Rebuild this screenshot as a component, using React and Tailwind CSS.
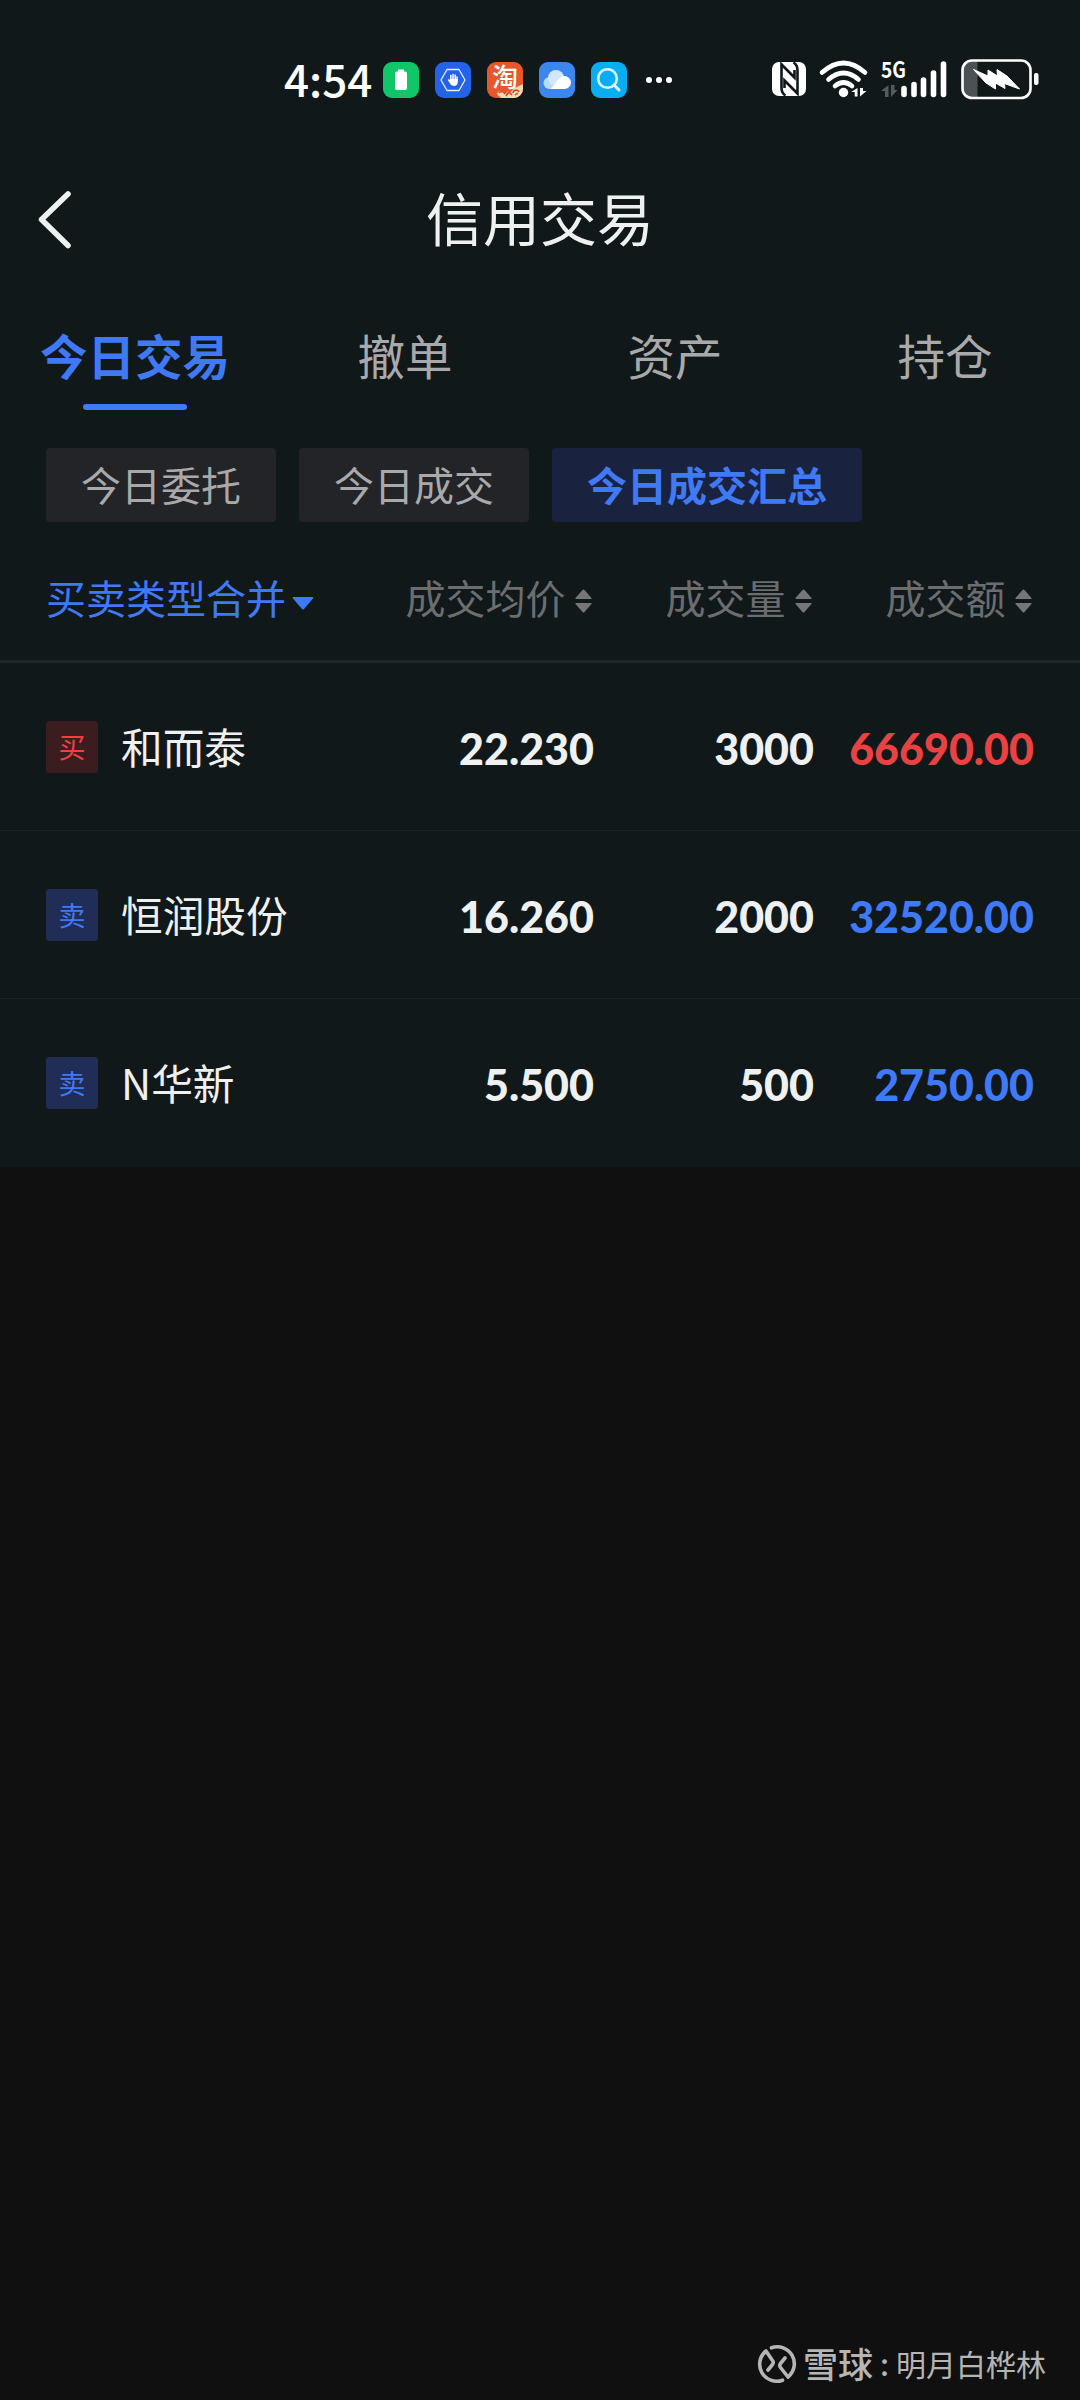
import { useState } from "react";

const TABS = ["今日交易", "撤单", "资产", "持仓"];
const FILTERS = ["今日委托", "今日成交", "今日成交汇总"];

const TRADES = [
  { side: "buy", name: "和而泰", price: "22.230", volume: "3000", amount: "66690.00" },
  { side: "sell", name: "恒润股份", price: "16.260", volume: "2000", amount: "32520.00" },
  { side: "sell", name: "N华新", price: "5.500", volume: "500", amount: "2750.00" },
];

function AppIcons() {
  return (
    <div className="flex gap-4 ml-3">
      <svg width="36" height="36" viewBox="0 0 36 36">
        <rect width="36" height="36" rx="9" fill="#0fc668" />
        <path d="M15 7.500h6v2h1a2 2 0 0 1 2 2V26a2 2 0 0 1-2 2h-8a2 2 0 0 1-2-2V11.500a2 2 0 0 1 2-2h1z" fill="#fff" />
      </svg>
      <svg width="36" height="36" viewBox="0 0 36 36" fill="none">
        <rect width="36" height="36" rx="9" fill="#2462ea" />
        <path d="M12 7.500h12L30 18l-6 10.500H12L6 18z" stroke="#e8f0ff" strokeWidth="1.300" strokeLinejoin="round" />
        <path d="M15.800 18v-4.500M18 17.500v-5M20.200 17.500v-4.500M22 18.500v-3.500M16 20l-2.500-2" stroke="#fff" strokeWidth="1.500" strokeLinecap="round" />
        <path d="M15 17h7.700v3.500c0 2.200-1.500 3.500-3.700 3.500-2 0-3-1-4-2.500l-1.500-2.500z" fill="#fff" />
      </svg>
      <svg className="overflow-visible" width="36" height="36" viewBox="0 0 36 36">
        <rect width="36" height="36" rx="9" fill="#e6582b" />
        <text x="18" y="24.500" textAnchor="middle" fontSize="26" fontWeight="500" fill="#fff" fontFamily="Noto Sans CJK SC">淘</text>
        <path d="M10 32c1-3 5-4 7-2l2 2 2-3 3 1 3-4 5-2 4-2v5a9 9 0 0 1-9 9H14z" fill="#f3d9b4" />
        <path d="M12 31c2-2 4-2 6 1M19 34l3-4 3 3M26 31c0-3 5-4 6-1M28 33l3-2" stroke="#c8472c" strokeWidth="1.500" fill="none" />
      </svg>
      <svg width="36" height="36" viewBox="0 0 36 36">
        <rect width="36" height="36" rx="9" fill="#3b87ee" />
        <circle cx="10.500" cy="21" r="6" fill="#b8dafb" />
        <circle cx="17" cy="16" r="8" fill="#d3e8fd" />
        <circle cx="25.500" cy="20.500" r="6.500" fill="#fff" />
        <path d="M10 27c5 0 7-11 13-11l3 11z" fill="#fff" />
      </svg>
      <svg width="36" height="36" viewBox="0 0 36 36" fill="none">
        <rect width="36" height="36" rx="9" fill="#08adf2" />
        <circle cx="16.500" cy="16.500" r="9.300" stroke="#dff6ff" strokeWidth="2.600" />
        <path d="M23 23l5 5" stroke="#dff6ff" strokeWidth="3" strokeLinecap="round" />
      </svg>
    </div>
  );
}

function StatusBar() {
  return (
    <div className="flex items-center h-40 pl-[284px] text-white">
      <span className="w-[87px] pb-1 text-[44px] font-medium whitespace-nowrap">4:54</span>
      <AppIcons />
      <div className="flex gap-1 ml-[19px]">
        <span className="size-[6px] rounded-full bg-white" />
        <span className="size-[6px] rounded-full bg-white" />
        <span className="size-[6px] rounded-full bg-white" />
      </div>

      {/* nfc, wifi, signal, battery */}
      <svg className="ml-[98px] overflow-visible" width="272" height="48" viewBox="770 56 272 48" fill="none">
        <rect x="772" y="62" width="34" height="34" rx="7" fill="#fff" />
        <path d="M785.500 95.500Q781.500 93 781.500 88V64.500L794.500 77.500V70" stroke="#11181a" strokeWidth="2.600" />
        <path d="M793.500 62.500Q797.500 65 797.500 70V93.500L784.500 80.500V88" stroke="#11181a" strokeWidth="2.600" />

        <path d="M822 72.500Q843.500 53.500 865 72.500M828.500 79.500Q843.500 66.500 858.500 79.500M835 86Q843.500 79 852 86" stroke="#fff" strokeWidth="4.600" strokeLinecap="round" />
        <circle cx="843.500" cy="92.500" r="4.700" fill="#fff" />
        <path d="M857.500 88v8.500h-2.800v-4.500h-3.500zM860 88v8.500l6.500-5.500h-3.500v-3z" fill="#fff" />

        <text x="881" y="77.500" fontSize="22.500" fontWeight="700" fill="#fff" fontFamily="Noto Sans CJK SC" textLength="25" lengthAdjust="spacingAndGlyphs">5G</text>
        <path d="M888.500 85v12h-3.500v-6h-4zM891 85v12l6.500-7h-3V85z" fill="#555b5d" />
        <path d="M904 88.500v6M914 84.500v10M923.500 80v14.500M933.500 73v21.500M943.500 64v30.500" stroke="#fff" strokeWidth="5.600" strokeLinecap="round" />

        <path d="M972 61h5.500v36H972a9 9 0 0 1-9-9V70a9 9 0 0 1 9-9z" fill="#4c5153" />
        <rect x="962.500" y="60.500" width="68" height="37.500" rx="9.500" stroke="#fff" strokeWidth="2.600" />
        <rect x="1034" y="73" width="4.500" height="12" rx="2" fill="#fff" />
        <path d="M973.500 69.500l14.500 6.500 0-6 9.500 6-.5-6.500 10 6.500 12.500 13-15-5.500.5 5-9.500-5.500 0 6-9.500-6z" fill="#fff" stroke="#fff" strokeWidth="1" strokeLinejoin="round" />
      </svg>
    </div>
  );
}

function SortIcon() {
  return (
    <svg className="mt-[9px]" width="17" height="24" viewBox="0 0 17 24" fill="#757678">
      <path d="M7.500 1q1-1 2 0l7 8q.5 1-.5 1H1q-1 0-.5-1zM7.500 23q1 1 2 0l7-8q.5-1-.5-1H1q-1 0-.5 1z" />
    </svg>
  );
}

function SortHeader({ label }) {
  return (
    <div className="flex items-center justify-end gap-[9px] pr-[2px] text-[#6c6d6f]">
      {label}
      <SortIcon />
    </div>
  );
}

function TradeRow({ trade }) {
  const isBuy = trade.side === "buy";
  return (
    <div className="grid grid-cols-[328px_220px_220px_220px] items-center h-[168px] pl-[46px] border-b border-[#1a2123] last:border-b-0">
      <div className="flex items-center gap-[23px]">
        <span
          className={`flex items-center justify-center size-[52px] pb-px rounded text-[27px] leading-none ${
            isBuy ? "bg-[#3b1d20] text-[#f04040]" : "bg-[#202d57] text-[#4079f6]"
          }`}
        >
          {isBuy ? "买" : "卖"}
        </span>
        <span className="text-[41.7px] leading-none text-[#eff1f1] whitespace-nowrap">{trade.name}</span>
      </div>
      <span className="pt-[5px] text-right font-['Lato',sans-serif] text-[43px] font-black text-[#eff1f1]">{trade.price}</span>
      <span className="pt-[5px] text-right font-['Lato',sans-serif] text-[43px] font-black text-[#eff1f1]">{trade.volume}</span>
      <span className={`pt-[5px] text-right font-['Lato',sans-serif] text-[43px] font-black ${isBuy ? "text-[#e84243]" : "text-[#4079f6]"}`}>
        {trade.amount}
      </span>
    </div>
  );
}

function App() {
  const [tab, setTab] = useState(0);
  const [filter, setFilter] = useState(2);

  return (
    <div className="flex flex-col w-[1080px] h-[2400px] overflow-hidden bg-[#101010] font-['Noto_Sans_CJK_SC',sans-serif]">
      <div className="bg-[#11181a]">
        <StatusBar />

        <header className="grid grid-cols-[120px_1fr_120px] items-center h-[120px]">
          <button className="pl-[36px]">
            <svg width="36" height="60" viewBox="0 0 36 60" fill="none" stroke="#eff1f1" strokeWidth="5.500" strokeLinecap="round" strokeLinejoin="round">
              <path d="M32 4L5.500 29.500l26.500 26" />
            </svg>
          </button>
          <h1 className="pb-[7px] text-center text-[57px] leading-none text-[#eff1f1]">信用交易</h1>
        </header>

        <nav className="flex h-[168px]">
          {TABS.map((label, i) => (
            <button
              key={label}
              onClick={() => setTab(i)}
              className={`flex flex-col flex-1 items-center pt-[51px] text-[47.5px] leading-[47px] ${
                tab === i ? "font-bold text-[#4079f6]" : "text-[#a9a9ab]"
              }`}
            >
              {label}
              {tab === i && <span className="w-[104px] h-[6px] mt-[26px] rounded-full bg-[#4079f6]" />}
            </button>
          ))}
        </nav>

        <div className="flex gap-[23px] pl-[46px]">
          {FILTERS.map((label, i) => (
            <button
              key={label}
              onClick={() => setFilter(i)}
              className={`h-[74px] px-[35px] pb-[3px] rounded text-[40px] leading-none ${
                filter === i ? "bg-[#19233f] font-bold text-[#4079f6]" : "bg-[#222427] text-[#a9a9ab]"
              }`}
            >
              {label}
            </button>
          ))}
        </div>

        <div className="grid grid-cols-[328px_219.5px_220px_220px] items-center h-[141px] pt-[11px] pl-[46px] border-b-3 border-[#1f2628] text-[40px] leading-none">
          <div className="flex items-center gap-[6px] text-[#4079f6]">
            买卖类型合并
            <svg className="mt-[13px]" width="22" height="13" viewBox="0 0 22 13" fill="#4079f6">
              <path d="M1.500 0h19q1.500 0 .5 1.500L12 12q-1 1-2 0L1 1.500Q0 0 1.500 0z" />
            </svg>
          </div>
          <SortHeader label="成交均价" />
          <SortHeader label="成交量" />
          <SortHeader label="成交额" />
        </div>

        <div>
          {TRADES.map((trade) => (
            <TradeRow key={trade.name} trade={trade} />
          ))}
        </div>
      </div>

      <footer className="flex items-center mt-auto mb-4 pl-[757px] text-[#b5b5b5] leading-none">
        <svg width="40" height="40" viewBox="0 0 40 40" fill="none" stroke="#b5b5b5" strokeWidth="3.600" strokeLinecap="round" strokeLinejoin="round">
          <path d="M14.500 3.800A17 17 0 0 1 31 33L23.500 23.500Q22 21.500 23.500 19.500L28 14" />
          <path d="M25.500 36.200A17 17 0 0 1 9 7L15.500 16.500Q17 18.500 15.500 20.500L11 26" />
        </svg>
        <span className="ml-[6px] pb-[3px] text-[35px] font-medium">雪球</span>
        <span className="w-[23px] pb-[3px] text-center text-[30px] font-medium">:</span>
        <span className="pb-[3px] text-[30px]">明月白桦林</span>
      </footer>
    </div>
  );
}

export default App;
